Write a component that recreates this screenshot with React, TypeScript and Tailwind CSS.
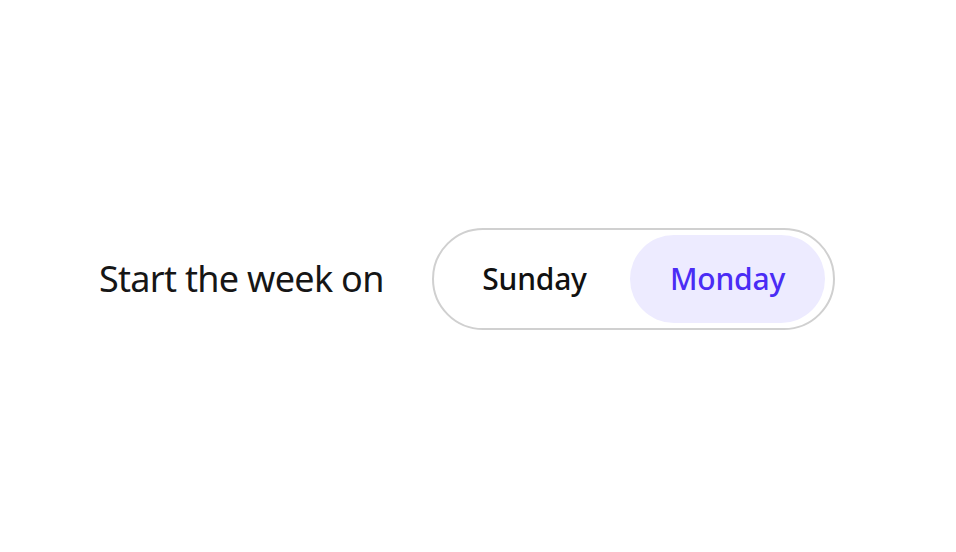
import React, { useState } from 'react';

const days = [
  { id: 'sunday', label: 'Sunday', width: 'w-[191px]' },
  { id: 'monday', label: 'Monday', width: 'w-[195px]' },
];

export default function App() {
  const [start, setStart] = useState('monday');

  return (
    <div
      className="h-[552px] w-full bg-white pt-[228px] pl-[99px]"
      style={{ fontFamily: '"Noto Sans", "Open Sans", sans-serif' }}
    >
      <div className="flex items-center">
        <span className="w-[333px] text-[36px] leading-none text-[#161616] tracking-[-0.7px]">
          Start the week on
        </span>
        <div className="flex rounded-full border-2 border-[#d0d0d0] py-[5px] pl-[5px] pr-[8px]">
          {days.map((d) => {
            const active = d.id === start;
            return (
              <button
                key={d.id}
                onClick={() => setStart(d.id)}
                className={`${d.width} h-[88px] rounded-full text-[30px] font-medium leading-none tracking-[-0.2px] ${
                  active ? 'bg-[#edebff] text-[#4a2cf5]' : 'text-[#111111]'
                }`}
              >
                {d.label}
              </button>
            );
          })}
        </div>
      </div>
    </div>
  );
}
